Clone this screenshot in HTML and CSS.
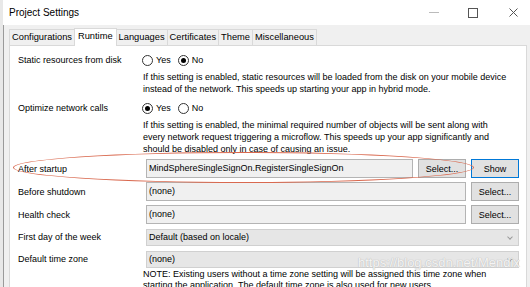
FILE: index.html
```html
<!DOCTYPE html>
<html lang="en">
<head>
    <meta charset="UTF-8">
    <title>Project Settings</title>
    <link rel="stylesheet" href="styles.css">
</head>
<body>
    <div class="window">
        <div class="titlebar">
            <span class="title">Project Settings</span>
            <div class="controls">
                <span class="ctl min"></span>
                <span class="ctl max"></span>
                <span class="ctl close">
                    <svg width="9" height="9" viewBox="0 0 9 9"><path d="M0.5 0.5 L8.5 8.5 M8.5 0.5 L0.5 8.5" stroke="#555" stroke-width="1"/></svg>
                </span>
            </div>
        </div>

        <div class="tabs">
            <div class="tab">Configurations</div>
            <div class="tab active">Runtime</div>
            <div class="tab">Languages</div>
            <div class="tab">Certificates</div>
            <div class="tab">Theme</div>
            <div class="tab">Miscellaneous</div>
        </div>

        <div class="panel">
            <div class="row radio-row">
                <div class="label">Static resources from disk</div>
                <div class="radios">
                    <span class="radio"></span><span class="opt">Yes</span>
                    <span class="radio checked"></span><span class="opt">No</span>
                </div>
            </div>
            <div class="desc">If this setting is enabled, static resources will be loaded from the disk on your mobile device<br>instead of the network. This speeds up starting your app in hybrid mode.</div>

            <div class="row radio-row second">
                <div class="label">Optimize network calls</div>
                <div class="radios">
                    <span class="radio checked"></span><span class="opt">Yes</span>
                    <span class="radio"></span><span class="opt">No</span>
                </div>
            </div>
            <div class="desc">If this setting is enabled, the minimal required number of objects will be sent along with<br>every network request triggering a microflow. This speeds up your app significantly and<br>should be disabled only in case of causing an issue.</div>

            <div class="row field-row">
                <div class="label">After startup</div>
                <div class="field short">MindSphereSingleSignOn.RegisterSingleSignOn</div>
                <button class="btn inner">Select...</button>
                <button class="btn show">Show</button>
            </div>
            <div class="row field-row">
                <div class="label">Before shutdown</div>
                <div class="field">(none)</div>
                <button class="btn">Select...</button>
            </div>
            <div class="row field-row">
                <div class="label">Health check</div>
                <div class="field">(none)</div>
                <button class="btn">Select...</button>
            </div>
            <div class="row field-row dropdown-row">
                <div class="label">First day of the week</div>
                <div class="dropdown">Default (based on locale)<span class="chev"></span></div>
            </div>
            <div class="row field-row dropdown-row">
                <div class="label">Default time zone</div>
                <div class="dropdown">(none)<span class="chev"></span></div>
            </div>
            <div class="desc note">NOTE: Existing users without a time zone setting will be assigned this time zone when<br>starting the application. The default time zone is also used for new users.</div>
        </div>

        <div class="highlight"></div>
        <div class="watermark">https://blog.csdn.net/Mendix</div>
    </div>
</body>
</html>
```

FILE: styles.css
```css
body {
    margin: 0;
    font-family: "Liberation Sans", Arial, sans-serif;
    font-size: 9px;
    color: #000;
    background-color: #f0f0f0;
    overflow: hidden;
}

.window {
    position: relative;
    height: 287px;
    border-left: 3px solid #e8e8e8;
    box-shadow: inset 1px 0 0 #9a9a9a;
    background-color: #f0f0f0;
    overflow: hidden;
}

.titlebar {
    height: 25px;
    background-color: #fff;
    display: flex;
    align-items: center;
    justify-content: space-between;
}

.title {
    font-size: 10px;
    padding-left: 6px;
}

.controls {
    display: flex;
    align-items: center;
    height: 100%;
}

.ctl {
    display: flex;
    align-items: center;
    justify-content: center;
    width: 30px;
    margin-right: 9px;
    height: 100%;
}

.min::before {
    content: "";
    width: 10px;
    border-top: 1px solid #bbb;
}

.max::before {
    content: "";
    width: 8px;
    height: 8px;
    border: 1px solid #555;
}

.close {
    width: 33px;
    margin-right: 0;
}

.tabs {
    display: flex;
    align-items: flex-end;
    height: 20px;
    padding-left: 6px;
}

.tab {
    height: 15px;
    line-height: 15px;
    padding: 0 2px;
    border: 1px solid #d9d9d9;
    border-bottom: none;
    margin-right: -1px;
    background-color: #f0f0f0;
    font-size: 9.3px;
}

.tab.active {
    height: 17px;
    line-height: 15px;
    background-color: #fff;
    position: relative;
    z-index: 1;
    margin-bottom: -1px;
    padding: 0 3px;
}

.panel {
    margin-left: 6px;
    margin-right: 3px;
    background-color: #fff;
    border: 1px solid #d9d9d9;
    padding: 7px 7px 0 7px;
    height: 262px;
    box-sizing: border-box;
}

.row {
    display: grid;
    grid-template-columns: 124px 1fr;
    align-items: center;
}

.label {
    padding-left: 1px;
}

.radio-row {
    height: 14px;
}

.radio-row.second {
    margin-top: 6px;
}

.radios {
    display: flex;
    align-items: center;
}

.radio {
    width: 11px;
    height: 11px;
    border: 1px solid #333;
    border-radius: 50%;
    box-sizing: border-box;
    position: relative;
    margin-left: 1px;
}

.radio.checked::after {
    content: "";
    position: absolute;
    left: 2px;
    top: 2px;
    width: 5px;
    height: 5px;
    border-radius: 50%;
    background-color: #000;
}

.opt {
    margin: 0 6px 0 3px;
}

.desc {
    margin-left: 126px;
    margin-top: 4px;
    line-height: 12px;
    white-space: nowrap;
}

.field-row {
    grid-template-columns: 124px 1fr auto auto;
    column-gap: 5px;
    height: 19px;
    margin-top: 4px;
}

.dropdown-row {
    height: 18px;
}

.field, .dropdown {
    height: 19px;
    line-height: 17px;
    box-sizing: border-box;
    border: 1px solid #b4b4b4;
    background-color: #f0f0f0;
    padding-left: 2px;
    white-space: nowrap;
}

.field-row .field {
    grid-column: 2 / 4;
}

.field-row .field.short {
    grid-column: 2;
}

.dropdown {
    grid-column: 2 / 5;
    border-color: #d0d0d0;
    background-color: #e6e6e6;
    position: relative;
    height: 17px;
    line-height: 15px;
}

.chev {
    position: absolute;
    right: 6px;
    top: 5px;
    width: 3px;
    height: 3px;
    border-right: 1px solid #999;
    border-bottom: 1px solid #999;
    transform: rotate(45deg);
}

.btn {
    font-family: inherit;
    font-size: 9px;
    height: 19px;
    width: 48px;
    padding: 0;
    margin: 0;
    background-color: #e1e1e1;
    border: 1px solid #adadad;
    color: #000;
    grid-column: 4;
}

.btn.inner {
    grid-column: 3;
}

.btn.show {
    grid-column: 4;
    border-color: #0078d7;
    background-color: #e1e1e1;
}

.note {
    margin-top: 1px;
    line-height: 11px;
}

.highlight {
    position: absolute;
    left: 10px;
    top: 152px;
    width: 459px;
    height: 29px;
    border: 1px solid #d9694f;
    border-radius: 50%;
}

.watermark {
    position: absolute;
    left: 355px;
    top: 255px;
    font-size: 13px;
    color: rgba(255, 255, 255, 0.85);
    text-shadow: 0 0 1px #bbb, 0 0 1px #bbb;
}
```
